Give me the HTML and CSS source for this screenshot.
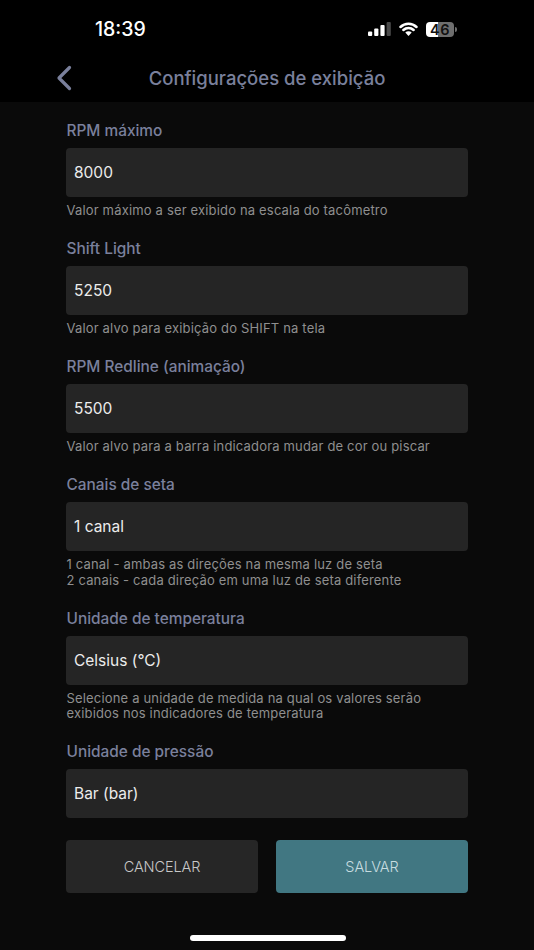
FILE: index.html
```html
<!DOCTYPE html>
<html lang="pt">
<head>
<meta charset="utf-8">
<title>Configurações de exibição</title>
<link rel="stylesheet" href="styles.css">
</head>
<body>
<div class="screen">
  <header class="top">
    <div class="status">
      <span class="time">18:39</span>
      <div class="status-icons">
        <svg class="signal" width="23" height="14" viewBox="0 0 23 14"><rect x="0" y="9.500" width="4.200" height="4.500" rx="1" fill="#fff"/><rect x="6.200" y="6.500" width="4.200" height="7.500" rx="1" fill="#fff"/><rect x="12.400" y="3" width="4.200" height="11" rx="1" fill="#fff"/><rect x="18.600" y="0" width="4.200" height="14" rx="1" fill="#4a4a4a"/></svg>
        <svg class="wifi" width="19" height="14" viewBox="0 0 19 14"><path d="M1.500 5a11.500 11.500 0 0 1 16 0M4.400 8a7.300 7.300 0 0 1 10.200 0" fill="none" stroke="#fff" stroke-width="2.500" stroke-linecap="round"/><path d="M9.500 14 6.300 10.600a4.500 4.500 0 0 1 6.400 0z" fill="#fff"/></svg>
        <div class="battery"><div class="battery-body"><span class="battery-num">46</span></div><span class="battery-cap"></span></div>
      </div>
    </div>
    <div class="nav">
      <svg class="back" width="16" height="26" viewBox="0 0 16 26"><path d="M13.500 2.500 3 13l10.500 10.500" fill="none" stroke="#7a809c" stroke-width="3.200" stroke-linecap="round" stroke-linejoin="round"/></svg>
      <h1 class="title">Configurações de exibição</h1>
    </div>
  </header>
  <main class="content">
    <section class="field">
      <h2 class="label">RPM máximo</h2>
      <div class="input">8000</div>
      <p class="help">Valor máximo a ser exibido na escala do tacômetro</p>
    </section>
    <section class="field">
      <h2 class="label">Shift Light</h2>
      <div class="input">5250</div>
      <p class="help">Valor alvo para exibição do SHIFT na tela</p>
    </section>
    <section class="field">
      <h2 class="label">RPM Redline (animação)</h2>
      <div class="input">5500</div>
      <p class="help">Valor alvo para a barra indicadora mudar de cor ou piscar</p>
    </section>
    <section class="field">
      <h2 class="label">Canais de seta</h2>
      <div class="input">1 canal</div>
      <p class="help">1 canal - ambas as direções na mesma luz de seta<br>2 canais - cada direção em uma luz de seta diferente</p>
    </section>
    <section class="field">
      <h2 class="label">Unidade de temperatura</h2>
      <div class="input">Celsius (°C)</div>
      <p class="help">Selecione a unidade de medida na qual os valores serão<br>exibidos nos indicadores de temperatura</p>
    </section>
    <section class="field">
      <h2 class="label">Unidade de pressão</h2>
      <div class="input">Bar (bar)</div>
    </section>
    <div class="actions">
      <button class="btn cancel">CANCELAR</button>
      <button class="btn save">SALVAR</button>
    </div>
  </main>
  <div class="home"></div>
</div>
</body>
</html>
```
FILE: styles.css
```css
* { box-sizing: border-box; }
html, body { margin: 0; padding: 0; background: #0a0a0a; }
body { font-family: Inter, "Liberation Sans", sans-serif; }
.screen { width: 534px; height: 950px; display: flex; flex-direction: column; overflow: hidden; background: #0a0a0a; }
.top { height: 102px; background: #000; flex: none; }
.status { height: 58px; display: flex; justify-content: space-between; align-items: center; padding: 0 77px 0 95px; }
.time { color: #fff; font-size: 19.500px; font-weight: 500; }
.status-icons { display: flex; align-items: center; }
.signal { margin-right: 8px; }
.wifi { margin-right: 8px; }
.battery { display: flex; align-items: center; }
.battery-body { width: 28px; height: 15px; border-radius: 4px; background: linear-gradient(90deg, #fff 0 44%, #6e6e6e 44% 100%); display: flex; align-items: center; justify-content: center; }
.battery-num { color: #111; font-size: 14.500px; font-weight: 600; letter-spacing: 0.5px; }
.battery-cap { width: 2px; height: 5px; margin-left: 1px; background: #6e6e6e; border-radius: 0 2px 2px 0; }
.nav { height: 44px; display: flex; align-items: center; justify-content: center; position: relative; margin-top: -2px; }
.back { position: absolute; left: 56px; top: 9px; }
.title { margin: 0; color: #7a809c; font-size: 18.500px; font-weight: 500; }
.content { flex: 1; padding: 19px 66px 0 66px; display: flex; flex-direction: column; }
.field { margin-bottom: 20.500px; }
.label { margin: 0 0 7px; color: #7a809c; font-size: 15.400px; font-weight: 500; line-height: 20px; padding-left: 0.5px; }
.input { height: 49px; background: #252525; border-radius: 4px; color: #ececec; font-size: 15.500px; padding-left: 8px; display: flex; align-items: center; }
.help { margin: 6px 0 0; color: #8f8f8f; font-size: 13px; line-height: 15.500px; letter-spacing: 0.17px; padding-left: 0.5px; }
.actions { display: flex; gap: 18px; margin-top: 1px; }
.btn { flex: 1; height: 53.500px; border: 0; border-radius: 4px; font-family: inherit; font-size: 14.500px; font-weight: 300; letter-spacing: -0.1px; }
.cancel { background: #262626; color: #c8c8c8; }
.save { background: #417782; color: #c8dde0; }
.home { position: absolute; left: 190px; top: 935px; width: 155.500px; height: 6px; border-radius: 3px; background: #fff; }
```
